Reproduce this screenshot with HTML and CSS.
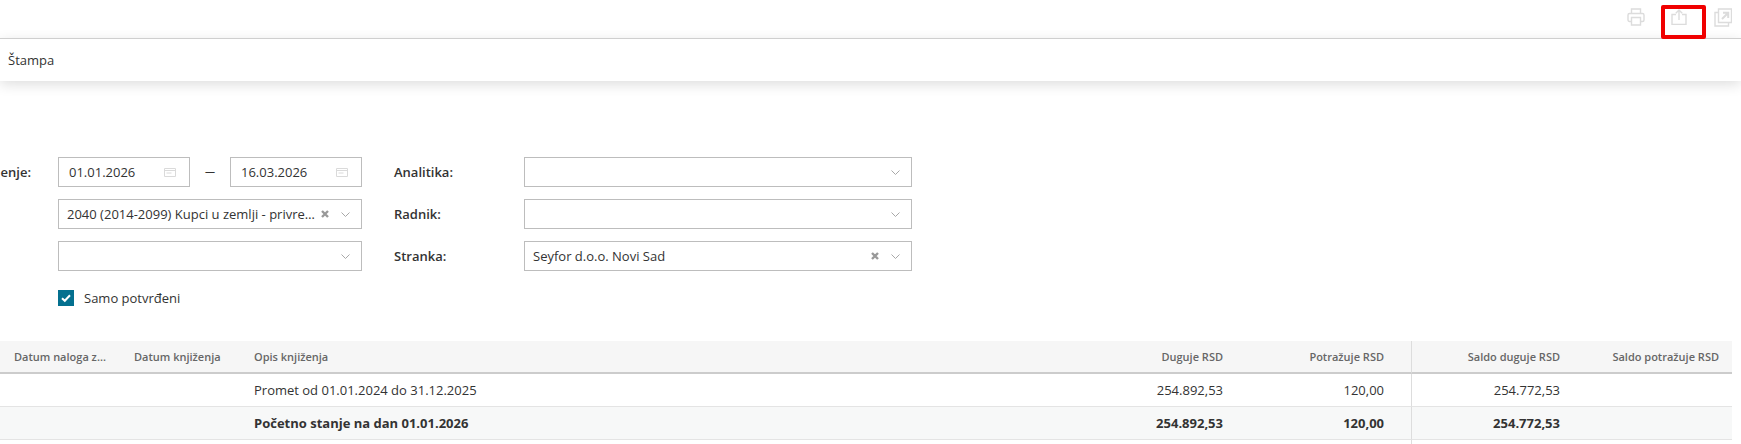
FILE: index.html
```html
<!DOCTYPE html>
<html>
  <head>
    <meta charset="utf-8" />
    <link rel="stylesheet" href="styles.css">
  </head>
  <body>
    <div class="toolbar">
      <svg class="tool-icon print-icon" viewBox="0 0 18 18">
        <path d="M4.500 5.500V1h9v4.500M4.500 13.500H2.500a1.500 1.500 0 0 1-1.500-1.500V7a1.500 1.500 0 0 1 1.500-1.500h13A1.500 1.500 0 0 1 17 7v5a1.500 1.500 0 0 1-1.500 1.500h-2" />
        <path d="M4.500 9.500h9V17h-9z" />
      </svg>
      <svg class="tool-icon share-icon" viewBox="0 0 16 16">
        <path d="M5 5.500H1v10h14v-10h-4" />
        <path d="M8 11V1.500M4.800 4.200 8 1l3.200 3.200" />
      </svg>
      <svg class="tool-icon open-icon" viewBox="0 0 18 19">
        <path d="M4.500 1h13v13.500h-13z" />
        <path d="M4.500 4.500H1V18h13.500v-3.500" />
        <path d="M8 11l6-6M9 4.800h5.200V10" stroke-width="2" />
      </svg>
      <div class="marker"></div>
    </div>

    <div class="tabs">
      <span class="tab">Štampa</span>
    </div>

    <div class="filters">
      <label class="field-label first-label">enje:</label>
      <div class="date-range">
        <div class="input date-input">
          <span>01.01.2026</span>
          <svg class="calendar" viewBox="0 0 12 10"><path d="M.5 1.500h11v8H.5zM.5 3.500h11M2.500 6h5" /></svg>
        </div>
        <span class="dash">—</span>
        <div class="input date-input">
          <span>16.03.2026</span>
          <svg class="calendar" viewBox="0 0 12 10"><path d="M.5 1.500h11v8H.5zM.5 3.500h11M2.500 6h5" /></svg>
        </div>
      </div>
      <label class="field-label">Analitika:</label>
      <div class="input">
        <svg class="chevron" viewBox="0 0 9 5"><path d="M.5.500l4 4 4-4" /></svg>
      </div>

      <div></div>
      <div class="input">
        <span class="value">2040 (2014-2099) Kupci u zemlji - privre…</span>
        <svg class="clear" viewBox="0 0 8 8"><path d="M1 1l6 6M7 1 1 7" /></svg>
        <svg class="chevron" viewBox="0 0 9 5"><path d="M.5.500l4 4 4-4" /></svg>
      </div>
      <label class="field-label">Radnik:</label>
      <div class="input">
        <svg class="chevron" viewBox="0 0 9 5"><path d="M.5.500l4 4 4-4" /></svg>
      </div>

      <div></div>
      <div class="input">
        <svg class="chevron" viewBox="0 0 9 5"><path d="M.5.500l4 4 4-4" /></svg>
      </div>
      <label class="field-label">Stranka:</label>
      <div class="input">
        <span class="value">Seyfor d.o.o. Novi Sad</span>
        <svg class="clear" viewBox="0 0 8 8"><path d="M1 1l6 6M7 1 1 7" /></svg>
        <svg class="chevron" viewBox="0 0 9 5"><path d="M.5.500l4 4 4-4" /></svg>
      </div>
    </div>

    <div class="confirmed">
      <span class="checkbox">
        <svg viewBox="0 0 16 16"><path d="M4 8.200 6.800 10.800 12 5.200" /></svg>
      </span>
      <span>Samo potvrđeni</span>
    </div>

    <table class="ledger">
      <colgroup>
        <col class="col-date" />
        <col class="col-date" />
        <col class="col-desc" />
        <col class="col-num" />
        <col class="col-num" />
        <col class="col-saldo" />
        <col class="col-last" />
      </colgroup>
      <thead>
        <tr>
          <th>Datum naloga z...</th>
          <th>Datum knjiženja</th>
          <th>Opis knjiženja</th>
          <th class="num">Duguje RSD</th>
          <th class="num">Potražuje RSD</th>
          <th class="num divider">Saldo duguje RSD</th>
          <th class="num last">Saldo potražuje RSD</th>
        </tr>
      </thead>
      <tbody>
        <tr>
          <td></td>
          <td></td>
          <td>Promet od 01.01.2024 do 31.12.2025</td>
          <td class="num">254.892,53</td>
          <td class="num">120,00</td>
          <td class="num divider">254.772,53</td>
          <td class="num last"></td>
        </tr>
        <tr class="total">
          <td></td>
          <td></td>
          <td>Početno stanje na dan 01.01.2026</td>
          <td class="num">254.892,53</td>
          <td class="num">120,00</td>
          <td class="num divider">254.772,53</td>
          <td class="num last"></td>
        </tr>
        <tr class="next-row">
          <td></td>
          <td></td>
          <td></td>
          <td></td>
          <td></td>
          <td class="divider"></td>
          <td></td>
        </tr>
      </tbody>
    </table>
  </body>
</html>
```

FILE: styles.css
```css
/* Page */
html,
body {
  margin: 0;
  height: 444px;
  overflow: hidden;
  background-color: #ffffff;
}

body {
  font-family: "Open Sans", sans-serif;
  font-size: 13px;
  color: #333333;
}

/* Top icon bar */
.toolbar {
  position: relative;
  height: 38px;
  border-bottom: 1px solid #cfcfcf;
  display: flex;
  align-items: flex-start;
}

.tool-icon {
  fill: none;
  stroke: #dcdcdc;
  stroke-width: 1.4;
  flex: none;
}

.print-icon {
  width: 18px;
  height: 18px;
  margin: 8px 0 0 1627px;
}

.share-icon {
  width: 16px;
  height: 16px;
  margin: 9px 0 0 26px;
}

.open-icon {
  width: 18px;
  height: 19px;
  margin: 8px 0 0 27px;
}

.marker {
  position: absolute;
  left: 1661px;
  top: 5px;
  width: 37px;
  height: 26px;
  border: 4px solid #f00000;
  border-radius: 2px;
}

/* Tab bar */
.tabs {
  height: 42px;
  display: flex;
  align-items: center;
  padding-left: 8px;
  box-shadow: 0 3px 14px rgba(0, 0, 0, 0.14);
}

/* Filter form */
.filters {
  margin-top: 76px;
  display: grid;
  grid-template-columns: 58px 304px 162px 388px;
  grid-auto-rows: 30px;
  row-gap: 12px;
}

.field-label {
  font-weight: 600;
  line-height: 30px;
  padding-left: 32px;
}

.first-label {
  padding-left: 0;
  text-align: right;
  padding-right: 27px;
}

.date-range {
  display: flex;
  justify-content: space-between;
  align-items: center;
}

.dash {
  font-size: 10px;
  margin-bottom: 2px;
}

.input {
  box-sizing: border-box;
  height: 30px;
  border: 1px solid #bdbdbd;
  display: flex;
  align-items: center;
  justify-content: flex-end;
  padding: 0 11px 0 8px;
  background-color: #ffffff;
}

.date-input {
  width: 132px;
  padding: 0 13px 0 10px;
  justify-content: space-between;
}

.value {
  flex: 1;
  min-width: 0;
  white-space: nowrap;
}

.calendar {
  width: 12px;
  height: 10px;
  fill: none;
  stroke: #dadada;
  stroke-width: 1;
}

.chevron {
  width: 9px;
  height: 5px;
  fill: none;
  stroke: #a8a8a8;
  stroke-width: 1;
}

.clear {
  width: 8px;
  height: 8px;
  margin: 0 12px 0 6px;
  fill: none;
  stroke: #999999;
  stroke-width: 2.4;
}

.confirmed {
  margin: 19px 0 0 58px;
  height: 16px;
  display: flex;
  align-items: center;
  gap: 10px;
}

.checkbox {
  width: 16px;
  height: 16px;
  background-color: #04708f;
}

.checkbox svg {
  display: block;
  width: 16px;
  height: 16px;
  fill: none;
  stroke: #ffffff;
  stroke-width: 2;
}

/* Ledger table */
.ledger {
  margin-top: 35px;
  width: 1732px;
  table-layout: fixed;
  border-collapse: separate;
  border-spacing: 0;
}

.col-date { width: 120px; }
.col-desc { width: 849px; }
.col-num { width: 161px; }
.col-saldo { width: 176px; }
.col-last { width: 145px; }

.ledger th,
.ledger td {
  box-sizing: border-box;
  height: 33px;
  padding: 0 14px;
  text-align: left;
  white-space: nowrap;
  overflow: hidden;
  border-bottom: 1px solid #e4e4e4;
}

.ledger th {
  font-size: 11px;
  font-weight: 600;
  color: #666666;
  background-color: #f6f6f6;
  border-bottom: 2px solid #cccccc;
}

.ledger .num {
  text-align: right;
  padding-right: 27px;
}

.ledger .last {
  padding-right: 13px;
}

.ledger .divider {
  border-left: 1px solid #dddddd;
}

.total td {
  font-weight: 700;
  background-color: #f7f8f8;
}

.ledger .next-row td {
  height: 4px;
  border-bottom: 0;
}
```
